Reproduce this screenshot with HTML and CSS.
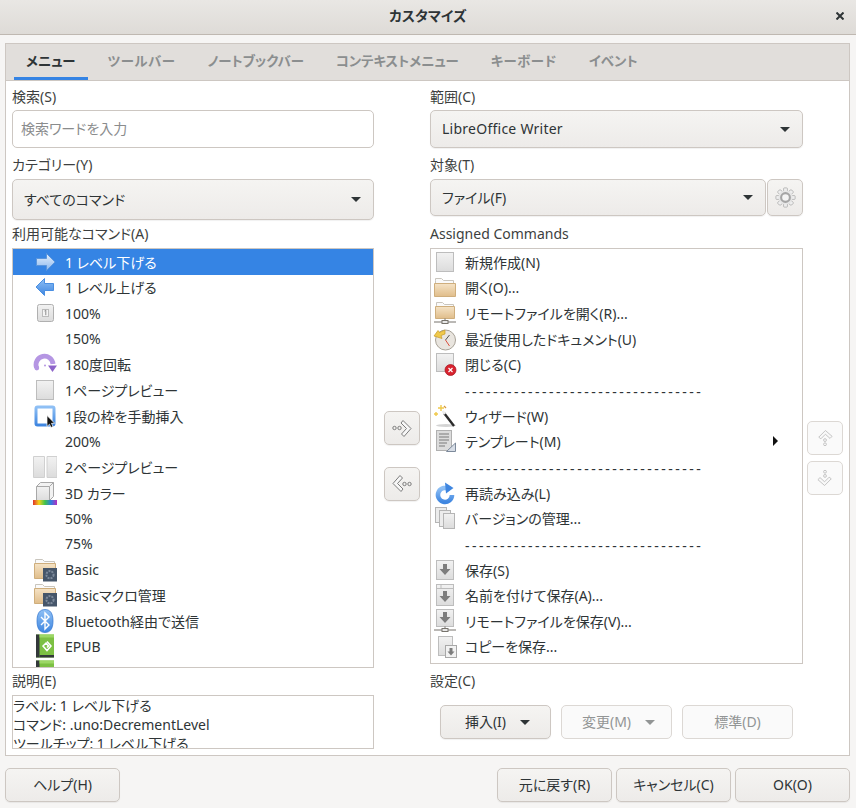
FILE: index.html
```html
<!DOCTYPE html>
<html lang="ja">
  <head>
    <meta charset="UTF-8" />
    <title>カスタマイズ</title>
    <link rel="stylesheet" href="styles.css">
  </head>
  <body>
    <svg class="icon-defs" xmlns="http://www.w3.org/2000/svg">
      <defs>
        <linearGradient id="g-page" x1="0" y1="0" x2="0" y2="1"><stop offset="0" stop-color="#f2f2f2"/><stop offset="1" stop-color="#dcdcdc"/></linearGradient>
        <linearGradient id="g-folder" x1="0" y1="0" x2="0" y2="1"><stop offset="0" stop-color="#f5e3c6"/><stop offset="1" stop-color="#e0bd8a"/></linearGradient>
        <linearGradient id="g-blue" x1="0" y1="0" x2="0" y2="1"><stop offset="0" stop-color="#8fc0f5"/><stop offset="1" stop-color="#3f86e0"/></linearGradient>
        <linearGradient id="g-pale" x1="0" y1="0" x2="0" y2="1"><stop offset="0" stop-color="#e6f0fc"/><stop offset="1" stop-color="#8ab8ef"/></linearGradient>
        <linearGradient id="g-rainbow" x1="0" y1="0" x2="1" y2="0"><stop offset="0" stop-color="#e0302c"/><stop offset=".25" stop-color="#f2d31b"/><stop offset=".5" stop-color="#3fc24a"/><stop offset=".75" stop-color="#2f7ce0"/><stop offset="1" stop-color="#b52ec0"/></linearGradient>
        <symbol id="i-page" viewBox="0 0 24 24"><rect x="3.5" y="2.5" width="17" height="19" fill="url(#g-page)" stroke="#bdbdbd"/></symbol>
        <symbol id="i-folder" viewBox="0 0 24 24"><path d="M2.5 5.5V3.5h6l2 2h10v4h-18z" fill="#fafafa" stroke="#c9c5bd"/><path d="M1.5 8.5h21v13h-21z" fill="url(#g-folder)" stroke="#cfae7c"/></symbol>
        <symbol id="i-folder-remote" viewBox="0 0 24 24"><path d="M3.5 4.5V1.5h6l2 2h9v4h-17z" fill="#fafafa" stroke="#c9c5bd"/><path d="M2.5 5.5h19v12h-19z" fill="url(#g-folder)" stroke="#cfae7c"/><path d="M1 21h22M12 17.500V21" stroke="#77736c" fill="none"/><rect x="9" y="19.500" width="6" height="3" fill="#e8e8e8" stroke="#77736c"/></symbol>
        <symbol id="i-folder-gear" viewBox="0 0 24 24"><path d="M2.5 4.5V1.5h7l2 2h10v4h-19z" fill="#fafafa" stroke="#c9c5bd"/><path d="M1.5 5.5h21v15h-21z" fill="url(#g-folder)" stroke="#cfae7c"/><rect x="10" y="10" width="14" height="13.500" fill="#46566a"/><circle cx="17" cy="16.700" r="3.600" fill="none" stroke="#7d8a9b" stroke-width="2" stroke-dasharray="2 1"/></symbol>
        <symbol id="i-clock" viewBox="0 0 24 24"><circle cx="12.5" cy="13" r="10" fill="#e9e5df" stroke="#a8a297"/><path d="M12.5 13l4-5" stroke="#555" fill="none"/><path d="M12.5 13l4 6" stroke="#d9503f" fill="none"/><path d="M1 9L5 3.5l1.5 2L12 3v4L8 8.5l1 3z" fill="#f0c94b" stroke="#c69a25" stroke-width=".7"/></symbol>
        <symbol id="i-close" viewBox="0 0 24 24"><rect x="3.5" y="1.5" width="17" height="18" fill="url(#g-page)" stroke="#bdbdbd"/><circle cx="17.5" cy="18" r="5.5" fill="#d8232f" stroke="#a3121c" stroke-width=".7"/><path d="M15.5 16l4 4M19.5 16l-4 4" stroke="#fff" stroke-width="1.2"/></symbol>
        <symbol id="i-wizard" viewBox="0 0 24 24"><ellipse cx="13" cy="21.5" rx="10" ry="1.5" fill="#d4d4d4"/><path d="M11 9l10 13" stroke="#2b2b2b" stroke-width="2.4"/><path d="M9.5 7l2.5 3" stroke="#eee" stroke-width="2.4"/><path d="M8 1v6M5 4h6M3 8v4M1 10h4" stroke="#f0c94b" stroke-width="1.4"/><path d="M11 2l2 2" stroke="#d99a3b" stroke-width="1.2"/></symbol>
        <symbol id="i-template" viewBox="0 0 24 24"><rect x="3.5" y="1.5" width="15" height="20" fill="#dcdcdc" stroke="#b0b0b0"/><path d="M6 5h10M6 8h10M6 11h10M6 14h8M6 17h6" stroke="#9a9a9a" stroke-width="1.3"/><path d="M22.5 14v8.5h-9z" fill="#d7dde6" stroke="#7d8a9b"/></symbol>
        <symbol id="i-reload" viewBox="0 0 24 24"><path d="M16.5 8.6A7 7 0 1 0 19 14" fill="none" stroke="url(#g-blue)" stroke-width="4.6"/><path d="M12 1.5l8.5 5.5-7.5 5.5z" fill="#3f86e0"/></symbol>
        <symbol id="i-versions" viewBox="0 0 24 24"><rect x="2.5" y="1.5" width="11" height="15" fill="#ececec" stroke="#b5b5b5"/><rect x="6.5" y="4.5" width="11" height="16" fill="#ececec" stroke="#b5b5b5"/><rect x="10.5" y="7.5" width="11" height="15" fill="url(#g-page)" stroke="#b5b5b5"/></symbol>
        <symbol id="i-save" viewBox="0 0 24 24"><rect x="3.5" y="2.5" width="17" height="19" fill="url(#g-page)" stroke="#bdbdbd"/><path d="M10 6h4v5h3.5L12 17l-5.500-6H10z" fill="#7d7d7d"/></symbol>
        <symbol id="i-saveas" viewBox="0 0 24 24"><rect x="3.5" y="1.500" width="17" height="21" fill="url(#g-page)" stroke="#bdbdbd"/><path d="M3.500 5.500h17M8 1.500v4" stroke="#bdbdbd" fill="none"/><path d="M10 8h4v5h3.500L12 19l-5.500-6H10z" fill="#7d7d7d"/></symbol>
        <symbol id="i-save-remote" viewBox="0 0 24 24"><rect x="3.500" y="0.500" width="17" height="17" fill="url(#g-page)" stroke="#bdbdbd"/><path d="M10 3h4v5h3.500L12 14 6.500 8H10z" fill="#7d7d7d"/><path d="M1 21h22M12 17.500V21" stroke="#77736c" fill="none"/><rect x="9" y="19.500" width="6" height="3" fill="#e8e8e8" stroke="#77736c"/></symbol>
        <symbol id="i-savecopy" viewBox="0 0 24 24"><rect x="5.500" y="2.500" width="14" height="19" fill="url(#g-page)" stroke="#bdbdbd"/><rect x="12.500" y="11.500" width="11" height="12" fill="#f2f2f2" stroke="#a8a8a8"/><path d="M16.500 14h3v3.500h2L18 21.500l-3.500-4h2z" fill="#7d7d7d"/></symbol>
        <symbol id="i-right" viewBox="0 0 24 24"><path d="M3.500 8.500h10V3.500l8.500 8.500-8.500 8.500v-5h-10z" fill="url(#g-pale)" stroke="#5a95dc"/></symbol>
        <symbol id="i-left" viewBox="0 0 24 24"><path d="M20.500 8.500h-9V3.500L3 12l8.500 8.500v-5h9z" fill="url(#g-blue)" stroke="#4a8fe2"/></symbol>
        <symbol id="i-zoom100" viewBox="0 0 24 24"><rect x="4.500" y="3.500" width="16" height="17" rx="2" fill="url(#g-page)" stroke="#b0b0b0"/><rect x="9.500" y="8.500" width="6" height="7" fill="#f4f4f4" stroke="#bbb"/><path d="M11.500 10l1.300-.8v5" stroke="#8c8c8c" fill="none"/></symbol>
        <symbol id="i-rotate" viewBox="0 0 24 24"><path d="M3.500 15.500A8.500 8.500 0 1 1 20 12" fill="none" stroke="#b596e3" stroke-width="4.800"/><path d="M15 13.500h9l-4.500 6.500z" fill="#8d64c9"/><circle cx="3.800" cy="16" r="2.400" fill="#b596e3"/><circle cx="12" cy="13.500" r="1" fill="#b596e3"/></symbol>
        <symbol id="i-frame" viewBox="0 0 24 24"><rect x="3" y="3" width="18" height="18" rx="1.500" fill="#fff" stroke="url(#g-blue)" stroke-width="3"/><path d="M14 11.500v11l2.500-2.300 1.500 3.300 2-1-1.500-3.200h3.200z" fill="#111" stroke="#fff" stroke-width=".7"/></symbol>
        <symbol id="i-twopage" viewBox="0 0 24 24"><path d="M.5 1.500h11v21H.5zM14 1.500h10v21H14z" fill="url(#g-page)" stroke="#d0d0d0"/></symbol>
        <symbol id="i-cube" viewBox="0 0 24 24"><path d="M3.500 5.500l4-4h13v14l-4 4h-13z" fill="#f2f2f2" stroke="#a8a8a8"/><path d="M3.500 5.500h13v14h-13z" fill="url(#g-page)" stroke="#a8a8a8"/><path d="M16.500 5.500l4-4" stroke="#a8a8a8"/><rect y="19" width="24" height="5" fill="url(#g-rainbow)"/></symbol>
        <symbol id="i-bluetooth" viewBox="0 0 24 24"><path d="M12 .5c5 0 8 3.500 8 11.500s-3 11.500-8 11.500S4 20 4 12 7 .5 12 .5z" fill="url(#g-blue)" stroke="#2f74cf" stroke-width=".7"/><path d="M8 8l8 8-4 4V4l4 4-8 8" fill="none" stroke="#fff" stroke-width="1.400"/></symbol>
        <symbol id="i-epub" viewBox="0 0 24 24"><rect x="3" y=".5" width="18" height="23" fill="#7cc043"/><rect x="3" y=".5" width="3.500" height="23" fill="#33383a"/><rect x="6.500" y=".5" width="14.500" height="3" fill="#9cd765"/><rect x="6.500" y="21" width="14.500" height="2.500" fill="#33383a"/><path d="M14 7.500L18 12l-4 4.500-4-4.500 3-3 2.500 3-1.500 1.500" fill="none" stroke="#fff" stroke-width="1.500"/></symbol>
        <symbol id="i-gear" viewBox="0 0 24 24"><g fill="#eee" stroke="#a5a5a5" stroke-width=".8"><rect x="9.800" y="1" width="4.400" height="22" rx="1"/><rect x="9.800" y="1" width="4.400" height="22" rx="1" transform="rotate(45 12 12)"/><rect x="9.800" y="1" width="4.400" height="22" rx="1" transform="rotate(90 12 12)"/><rect x="9.800" y="1" width="4.400" height="22" rx="1" transform="rotate(135 12 12)"/></g><circle cx="12" cy="12" r="8" fill="#e6e6e6"/><circle cx="12" cy="12" r="5" fill="#f4f4f4" stroke="#a5a5a5" stroke-width="2.400"/></symbol>
        <symbol id="i-move" viewBox="0 0 24 24"><path d="M13 4.500l8 8-7 8-2.500-2.500 5-5.500-5.500-5.500z" fill="#f7f7f7" stroke="#7d7d7d" stroke-linejoin="round"/><circle cx="4.500" cy="12" r="1.700" fill="none" stroke="#7d7d7d"/><circle cx="9.500" cy="12" r="1.700" fill="none" stroke="#7d7d7d"/></symbol>
      </defs>
    </svg>

    <header class="titlebar">
      <span class="title">カスタマイズ</span>
      <svg class="close" viewBox="0 0 8 8"><path d="M.5.500l7 7M7.500.500l-7 7"/></svg>
    </header>

    <div class="panel">
      <nav class="tabs">
        <span class="tab active">メニュー</span>
        <span class="tab loose">ツールバー</span>
        <span class="tab">ノートブックバー</span>
        <span class="tab">コンテキストメニュー</span>
        <span class="tab loose">キーボード</span>
        <span class="tab">イベント</span>
      </nav>
      <div class="tab-body">
        <div class="col">
          <div class="label">検索(S)</div>
          <div class="search">検索ワードを入力</div>
          <div class="label after-control">カテゴリー(Y)</div>
          <div class="combo tall"><span>すべてのコマンド</span><i class="caret"></i></div>
          <div class="label">利用可能なコマンド(A)</div>
          <div class="list left-list">
            <div class="row selected"><svg class="icon"><use href="#i-right"/></svg>1 レベル下げる</div>
            <div class="row"><svg class="icon"><use href="#i-left"/></svg>1 レベル上げる</div>
            <div class="row"><svg class="icon"><use href="#i-zoom100"/></svg>100%</div>
            <div class="row"><span class="icon"></span>150%</div>
            <div class="row"><svg class="icon"><use href="#i-rotate"/></svg>180度回転</div>
            <div class="row"><svg class="icon"><use href="#i-page"/></svg>1ページプレビュー</div>
            <div class="row"><svg class="icon"><use href="#i-frame"/></svg>1段の枠を手動挿入</div>
            <div class="row"><span class="icon"></span>200%</div>
            <div class="row"><svg class="icon"><use href="#i-twopage"/></svg>2ページプレビュー</div>
            <div class="row"><svg class="icon"><use href="#i-cube"/></svg>3D カラー</div>
            <div class="row"><span class="icon"></span>50%</div>
            <div class="row"><span class="icon"></span>75%</div>
            <div class="row"><svg class="icon"><use href="#i-folder-gear"/></svg>Basic</div>
            <div class="row"><svg class="icon"><use href="#i-folder-gear"/></svg>Basicマクロ管理</div>
            <div class="row"><svg class="icon"><use href="#i-bluetooth"/></svg>Bluetooth経由で送信</div>
            <div class="row"><svg class="icon"><use href="#i-epub"/></svg>EPUB</div>
            <div class="row"><svg class="icon"><use href="#i-epub"/></svg></div>
          </div>
          <div class="label after-list">説明(E)</div>
          <div class="desc">
            <div>ラベル: 1 レベル下げる</div>
            <div>コマンド: .uno:DecrementLevel</div>
            <div>ツールチップ: 1 レベル下げる</div>
          </div>
        </div>

        <div class="move-col">
          <button class="btn square"><svg class="btn-icon"><use href="#i-move"/></svg></button>
          <button class="btn square"><svg class="btn-icon flip"><use href="#i-move"/></svg></button>
        </div>

        <div class="col">
          <div class="label">範囲(C)</div>
          <div class="combo"><span class="writer">LibreOffice Writer</span><i class="caret"></i></div>
          <div class="label after-control">対象(T)</div>
          <div class="combo-row">
            <div class="combo grow"><span>ファイル(F)</span><i class="caret"></i></div>
            <button class="btn square gear"><svg class="gear-icon"><use href="#i-gear"/></svg></button>
          </div>
          <div class="label after-short">Assigned Commands</div>
          <div class="list right-list">
            <div class="row"><svg class="icon"><use href="#i-page"/></svg>新規作成(N)</div>
            <div class="row"><svg class="icon"><use href="#i-folder"/></svg>開く(O)...</div>
            <div class="row"><svg class="icon"><use href="#i-folder-remote"/></svg>リモートファイルを開く(R)...</div>
            <div class="row"><svg class="icon"><use href="#i-clock"/></svg>最近使用したドキュメント(U)</div>
            <div class="row"><svg class="icon"><use href="#i-close"/></svg>閉じる(C)</div>
            <div class="row"><span class="icon"></span><span class="dashes">----------------------------------</span></div>
            <div class="row"><svg class="icon"><use href="#i-wizard"/></svg>ウィザード(W)</div>
            <div class="row"><svg class="icon"><use href="#i-template"/></svg>テンプレート(M)<i class="submenu"></i></div>
            <div class="row"><span class="icon"></span><span class="dashes">----------------------------------</span></div>
            <div class="row"><svg class="icon"><use href="#i-reload"/></svg>再読み込み(L)</div>
            <div class="row"><svg class="icon"><use href="#i-versions"/></svg>バージョンの管理...</div>
            <div class="row"><span class="icon"></span><span class="dashes">----------------------------------</span></div>
            <div class="row"><svg class="icon"><use href="#i-save"/></svg>保存(S)</div>
            <div class="row"><svg class="icon"><use href="#i-saveas"/></svg>名前を付けて保存(A)...</div>
            <div class="row"><svg class="icon"><use href="#i-save-remote"/></svg>リモートファイルを保存(V)...</div>
            <div class="row"><svg class="icon"><use href="#i-savecopy"/></svg>コピーを保存...</div>
          </div>
          <div class="label after-right-list">設定(C)</div>
          <div class="settings">
            <button class="btn wide">挿入(I)<i class="caret"></i></button>
            <button class="btn wide" disabled>変更(M)<i class="caret"></i></button>
            <button class="btn wide" disabled>標準(D)</button>
          </div>
        </div>

        <div class="order-col">
          <button class="btn square" disabled><svg class="btn-icon up"><use href="#i-move"/></svg></button>
          <button class="btn square" disabled><svg class="btn-icon down"><use href="#i-move"/></svg></button>
        </div>
      </div>
    </div>

    <footer class="footer">
      <button class="btn action">ヘルプ(H)</button>
      <div class="footer-right">
        <button class="btn action">元に戻す(R)</button>
        <button class="btn action">キャンセル(C)</button>
        <button class="btn action">OK(O)</button>
      </div>
    </footer>
  </body>
</html>
```

FILE: styles.css
```css
* {
  box-sizing: border-box;
}

body {
  margin: 0;
  width: 856px;
  height: 808px;
  overflow: hidden;
  background-color: #f6f5f4;
  color: #2e3436;
  font-family: "Noto Sans", "Noto Sans CJK JP", sans-serif;
  font-size: 14px;
  font-feature-settings: "palt";
}

.icon-defs {
  display: block;
  width: 0;
  height: 0;
}

.titlebar {
  display: flex;
  justify-content: space-between;
  align-items: center;
  height: 35px;
  padding: 0 12px 2px 389px;
  background: linear-gradient(#e9e7e4, #dedbd7);
  border-bottom: 1px solid #bfb8b1;
}

.title {
  font-weight: bold;
  line-height: 28px;
}

.close {
  width: 8px;
  height: 8px;
  fill: none;
  stroke: #2e3436;
  stroke-width: 2;
}

.panel {
  width: 845px;
  height: 713px;
  margin: 8px 0 0 5px;
  background-color: #fff;
  border: 1px solid #cdc7c2;
}

.tabs {
  display: flex;
  gap: 8px;
  height: 37px;
  padding-left: 8px;
  background-color: #e1dedb;
  border-bottom: 1px solid #cdc7c2;
}

.tab {
  height: 36px;
  padding: 0 12px;
  line-height: 34px;
  font-size: 13.4px;
  font-weight: bold;
  color: #8b8e8f;
}

.tab.loose {
  letter-spacing: 0.6px;
}

.tab.active {
  color: #2e3436;
  border-bottom: 3px solid #3584e4;
}

.tab-body {
  display: grid;
  grid-template-columns: 362px 56px 373px 40px;
  padding: 6px 0 0 6px;
}

.col {
  display: flex;
  flex-direction: column;
}

.label {
  height: 20px;
  margin-bottom: 4px;
  line-height: 20px;
  color: #3d3f40;
}

.label:first-child {
  margin-bottom: 3px;
}

.after-control {
  margin-top: 7px;
}

.after-short {
  margin-top: 8px;
}

.combo + .label {
  margin-top: 7px;
}

.combo.tall + .label {
  margin-top: 4px;
}

.after-list {
  margin-top: 3px;
}

.after-right-list {
  margin-top: 7px;
  margin-bottom: 14px;
}

.search {
  height: 38px;
  padding: 0 8px;
  line-height: 36px;
  color: #8a8c8d;
  border: 1px solid #cdc7c2;
  border-radius: 5px;
}

.combo {
  display: flex;
  justify-content: space-between;
  align-items: center;
  height: 38px;
  padding: 0 12px 2px 11px;
  background: linear-gradient(#f5f4f2, #edebe9);
  border: 1px solid #cdc7c2;
  border-radius: 5px;
  box-shadow: 0 1px 1px rgba(0, 0, 0, 0.06);
}

.combo.tall {
  height: 41px;
}

.combo-row {
  display: flex;
  gap: 1px;
}

.combo.grow {
  flex: 1;
  height: 37px;
}

.writer {
  letter-spacing: 0.25px;
}

.caret {
  display: inline-block;
  width: 0;
  height: 0;
  margin-top: 2px;
  border-left: 5px solid transparent;
  border-right: 5px solid transparent;
  border-top: 5px solid #2e3436;
}

.list {
  overflow: hidden;
  border: 1px solid #cdc7c2;
}

.left-list {
  height: 420px;
}

.right-list {
  height: 416px;
}

.row {
  display: flex;
  align-items: center;
  flex-shrink: 0;
  height: 25.65px;
  padding-left: 20px;
  white-space: nowrap;
}

.right-list .row {
  padding-left: 2px;
}

.row.selected {
  background-color: #3584e4;
  color: #fff;
}

.icon {
  flex-shrink: 0;
  display: block;
  width: 24px;
  height: 24px;
  margin-right: 8px;
}

.dashes {
  padding-top: 3px;
  letter-spacing: 2.5px;
}

.submenu {
  width: 0;
  height: 0;
  margin-left: auto;
  margin-right: 24px;
  border-top: 5px solid transparent;
  border-bottom: 5px solid transparent;
  border-left: 5px solid #111;
}

.desc {
  height: 54px;
  overflow: hidden;
  line-height: 19px;
  white-space: nowrap;
  border: 1px solid #cdc7c2;
}

.btn {
  height: 34px;
  padding: 0 0 2px;
  font: inherit;
  color: #2e3436;
  background: linear-gradient(#f5f4f2, #edebe9);
  border: 1px solid #cdc7c2;
  border-radius: 5px;
  box-shadow: 0 1px 1px rgba(0, 0, 0, 0.06);
}

.btn:disabled {
  color: #929595;
  background: #fafafa;
  border-color: #dcd8d4;
  box-shadow: none;
}

.btn:disabled .caret {
  border-top-color: #929595;
}

.btn.square {
  display: flex;
  justify-content: center;
  align-items: center;
  width: 36px;
  padding: 0;
}

.btn.gear {
  height: 37px;
}

.gear-icon {
  width: 21px;
  height: 21px;
}

.btn-icon {
  width: 24px;
  height: 24px;
}

.btn-icon.flip {
  transform: rotate(180deg);
}

.btn-icon.up {
  width: 20px;
  height: 20px;
  transform: rotate(-90deg);
  opacity: 0.5;
}

.btn-icon.down {
  width: 20px;
  height: 20px;
  transform: rotate(90deg);
  opacity: 0.5;
}

.move-col {
  display: flex;
  flex-direction: column;
  gap: 22px;
  padding: 324px 0 0 10px;
}

.order-col {
  display: flex;
  flex-direction: column;
  gap: 6px;
  padding: 334px 0 0 4px;
}

.settings {
  display: flex;
  gap: 10px;
  padding-left: 10px;
}

.btn.wide {
  display: flex;
  justify-content: center;
  align-items: center;
  gap: 14px;
  width: 111px;
  padding-left: 4px;
}

.btn.wide:last-child {
  padding-left: 0;
}

.footer {
  display: flex;
  justify-content: space-between;
  padding: 12px 6px 0 5px;
}

.footer-right {
  display: flex;
  gap: 4px;
}

.btn.action {
  width: 115px;
}
```
